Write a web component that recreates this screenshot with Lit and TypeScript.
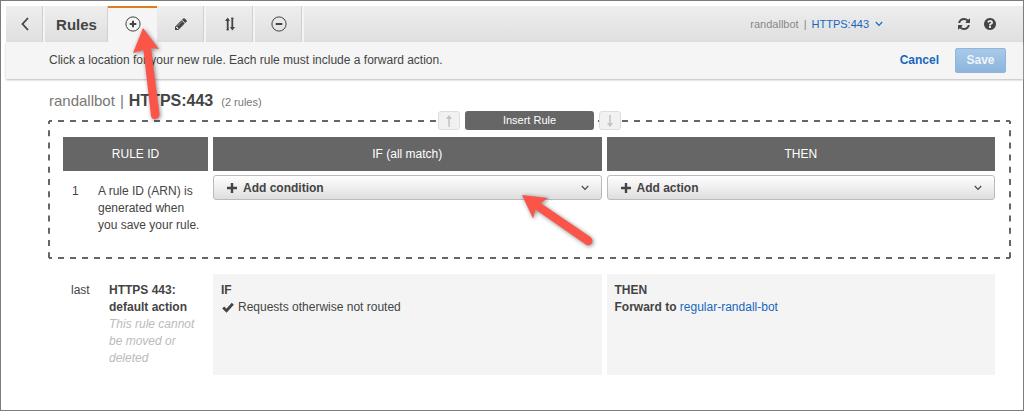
import { LitElement, html, css, svg } from 'lit';
import { customElement, property, state } from 'lit/decorators.js';
import { classMap } from 'lit/directives/class-map.js';

const chevron = svg`<svg class="chev" viewBox="0 0 8 6" width="8" height="6"><path d="M.8 1 4 4.4 7.2 1" fill="none" stroke="currentColor" stroke-width="1.1"/></svg>`;

const icons: Record<string, unknown> = {
  add: svg`<svg viewBox="0 0 16 16" width="16" height="16"><circle cx="8" cy="8" r="7.1" fill="none" stroke="currentColor"/><path d="M8 4.7v6.6M4.7 8h6.6" stroke="currentColor" stroke-width="2" fill="none"/></svg>`,
  edit: svg`<svg viewBox="0 128 1536 1536" width="12" height="12"><path fill="currentColor" d="M363 1536l91-91-235-235-91 91v107h128v128h107zm523-928q0-22-22-22-10 0-17 7L305 1135q-7 7-7 17 0 22 22 22 10 0 17-7L879 625q7-7 7-17zM832 416l416 416L416 1664H0v-416zm683 96q0 53-37 90l-166 166L896 352l166-165q36-38 90-38 53 0 91 38l235 234q37 39 37 91z"/></svg>`,
  reorder: svg`<svg viewBox="0 0 10 14" width="10" height="14"><path d="M2.7 13.2V2M7.300 .8V12" stroke="currentColor" stroke-width="1.800" fill="none"/><path d="M0 4 2.700.6 5 4ZM5 10l2.300 3.400L10 10Z" fill="currentColor"/><path d="M1.500 12.700h2.400M6.100 1.300h2.400" stroke="currentColor"/></svg>`,
  remove: svg`<svg viewBox="0 0 16 16" width="16" height="16"><circle cx="8" cy="8" r="7.1" fill="none" stroke="currentColor"/><path d="M4.700 8h6.600" stroke="currentColor" stroke-width="2" fill="none"/></svg>`,
};

@customElement('add-button')
class AddButton extends LitElement {
  @property() label = '';

  static styles = css`
    :host { display: block; }
    .add {
      display: flex; align-items: center; width: 100%; height: 25px; box-sizing: border-box;
      padding: 0 12px 0 13px; border: 1px solid #bbb; border-radius: 3px; cursor: pointer;
      background: linear-gradient(#fff, #dedede); color: #444;
      font: bold 12px/16px "Liberation Sans", Arial, sans-serif;
    }
    .text { flex: 1; margin-left: 6px; text-align: left; }
  `;

  render() {
    return html`<button class="add" aria-haspopup="menu">
      <svg viewBox="0 0 10 10" width="10" height="10"><path d="M5 0v10M0 5h10" stroke="currentColor" stroke-width="2.400"/></svg>
      <span class="text">${this.label}</span>${chevron}
    </button>`;
  }
}

@customElement('app-root')
class AppRoot extends LitElement {
  @state() mode = 'add';

  static styles = css`
    :host {
      display: block; box-sizing: border-box; min-height: 100vh; position: relative;
      padding: 5px 0 0 5px; border: 1px solid #7c7c7c; background: #fff; color: #444;
      font: 12px/17px "Liberation Sans", Arial, sans-serif;
    }
    button { font: inherit; cursor: pointer; }
    a { color: #1568bd; text-decoration: none; }
    .bar { display: flex; height: 36px; background: linear-gradient(#eee, #dfdfdf); }
    .cell {
      display: flex; align-items: center; justify-content: center; box-sizing: border-box;
      margin: 0; padding: 0; border: 0; border-right: 2px solid #f4f4f4; box-shadow: inset -1px 0 #d0d0d0;
      background: none; color: #444;
    }
    .back { width: 39px; }
    .title { width: 63px; font-size: 15px; font-weight: bold; border-right: 0; }
    .tab { width: 49px; }
    .tab.active { padding-bottom: 2px; background: #f5f5f5; border-top: 2px solid #e07b1f; border-right: 0; box-shadow: none; }
    .spacer { flex: 1; }
    .picker { display: flex; align-items: center; gap: 5px; margin-right: 75px; font-size: 11px; color: #888; }
    .picker a { display: flex; align-items: center; gap: 6px; }
    .tools { display: flex; align-items: center; gap: 14px; padding-right: 27px; }
    .tool { display: flex; padding: 0; border: 0; background: none; color: #444; }
    .hint {
      display: flex; align-items: center; height: 37px; padding: 0 17px 0 43px;
      background: #f5f5f5; box-shadow: 0 1px 2px #bbb;
    }
    .message { flex: 1; }
    .cancel { padding: 0; border: 0; background: none; color: #1568bd; font-weight: bold; }
    .save {
      width: 51px; height: 25px; margin-left: 16px; padding: 0; border: 1px solid #8fb5dc; border-radius: 2px;
      background: linear-gradient(#a9c9e8, #8db5dd); color: #eef5fb; font-weight: bold;
    }
    .content { padding: 12px 13px 0 43px; }
    .heading { display: flex; align-items: baseline; gap: 5px; margin: 0; font-size: 15px; line-height: 20px; font-weight: normal; color: #777; }
    .heading b { color: #444; font-size: 16px; }
    .count { margin-left: 3px; font-size: 11px; }
    .draft { position: relative; margin-top: 9px; padding: 16px 15px 20px 14px; min-height: 101px; }
    .outline { position: absolute; inset: 0; width: 100%; height: 100%; overflow: visible; stroke: #666; stroke-width: 2px; stroke-dashoffset: 3px; }
    .across { stroke-dasharray: 6 6; }
    .down { stroke-dasharray: 6 6.2; }
    .insert { position: absolute; top: -10px; left: 0; right: 0; display: flex; justify-content: center; align-items: center; gap: 5px; }
    .place { width: 129px; height: 19px; padding: 0; border: 0; border-radius: 3px; background: #666; color: #fff; font-size: 11px; line-height: 19px; }
    .move { display: flex; align-items: center; justify-content: center; width: 22px; height: 19px; padding: 0; border: 1px solid #ddd; border-radius: 3px; background: #f1f1f1; color: #c2c2c2; }
    .rules { position: relative; width: calc(100% + 10px); margin: 0 -5px; border-spacing: 5px 0; table-layout: fixed; }
    .col-id { width: 145px; }
    th { height: 34px; padding: 0; font-weight: normal; background: #666; color: #fff; }
    td { padding: 0; vertical-align: top; }
    .slot { margin-top: 4px; }
    .identity { display: flex; padding: 12px 0 0 9px; }
    .position { width: 26px; }
    .note { flex: 1; }
    .rules .note { padding-right: 8px; }
    .default { display: grid; grid-template-columns: 145px 1fr 1fr; gap: 5px; margin: 16px 15px 30px 14px; }
    .default .identity { padding: 8px 0 0 8px; }
    .default .position { width: 38px; }
    .default .note { padding-right: 6px; }
    .locked { color: #bbb; font-style: italic; }
    .panel { box-sizing: border-box; min-height: 101px; padding: 8px; background: #f4f4f4; }
    .check { margin: 0 4px 0 1px; vertical-align: -2px; }
    .pointers { position: absolute; left: 0; top: 0; pointer-events: none; filter: drop-shadow(1px 1px 2px #0007); }
  `;

  tab(name: string, label: string) {
    return html`<button class=${classMap({ cell: true, tab: true, active: this.mode === name })}
      aria-label=${label} @click=${() => (this.mode = name)}>${icons[name]}</button>`;
  }

  render() {
    return html`
      <header class="bar">
        <button class="cell back" aria-label="Back"><svg viewBox="0 0 8 14" width="8" height="14"><path d="M7 1 1.500 7 7 13" fill="none" stroke="currentColor" stroke-width="1.800"/></svg></button>
        <div class="cell title">Rules</div>
        ${this.tab('add', 'Add rules')}${this.tab('edit', 'Edit rules')}${this.tab('reorder', 'Reorder rules')}${this.tab('remove', 'Delete rules')}
        <div class="spacer"></div>
        <div class="picker"><span>randallbot</span><span>|</span><a href="#listener">HTTPS:443 ${chevron}</a></div>
        <div class="tools">
          <button class="tool" aria-label="Refresh"><svg viewBox="0 0 1536 1536" width="12" height="12"><path fill="currentColor" d="M1511 928q0 5-1 7-64 268-268 434.500T764 1536q-146 0-282.500-55T238 1324l-129 129q-19 19-45 19t-45-19-19-45V960q0-26 19-45t45-19h448q26 0 45 19t19 45-19 45l-137 137q71 66 161 102t187 36q134 0 250-65t186-179q11-17 53-117 8-23 30-23h192q13 0 22.500 9.500t9.500 22.500zm25-800v448q0 26-19 45t-45 19h-448q-26 0-45-19t-19-45 19-45l138-138Q969 256 768 256q-134 0-250 65T332 500q-11 17-53 117-8 23-30 23H50q-13 0-22.500-9.500T18 608v-7q65-268 270-434.500T768 0q146 0 284 55.500T1297 212l130-129q19-19 45-19t45 19 19 45z"/></svg></button>
          <button class="tool" aria-label="Help"><svg viewBox="0 0 1536 1536" width="12" height="12"><path fill="currentColor" d="M896 1248v-192q0-14-9-23t-23-9H672q-14 0-23 9t-9 23v192q0 14 9 23t23 9h192q14 0 23-9t9-23zm256-672q0-88-55.500-163T958 297t-170-41q-243 0-371 213-15 24 8 42l132 100q7 6 19 6 16 0 25-12 53-68 86-92 34-24 86-24 48 0 85.500 26t37.500 59q0 38-20 61t-68 45q-63 28-115.500 86.500T640 892v36q0 14 9 23t23 9h192q14 0 23-9t9-23q0-19 21.500-49.500T972 829q32-18 49-28.500t46-35 44.500-48 28-60.500 12.500-81zm384 192q0 209-103 385.500T1153.500 1433 768 1536t-385.500-103T103 1153.500 0 768t103-385.500T382.500 103 768 0t385.500 103T1433 382.500 1536 768z"/></svg></button>
        </div>
      </header>
      <section class="hint">
        <span class="message">Click a location for your new rule. Each rule must include a forward action.</span>
        <button class="cancel">Cancel</button><button class="save">Save</button>
      </section>
      <main class="content">
        <h1 class="heading"><span>randallbot</span><span>|</span><b>HTTPS:443</b><span class="count">(2 rules)</span></h1>
        <section class="draft">
          <svg class="outline">
            <line class="across" x1="0" y1="0" x2="100%" y2="0"/><line class="across" x1="0" y1="100%" x2="100%" y2="100%"/>
            <line class="down" x1="0" y1="0" x2="0" y2="100%"/><line class="down" x1="100%" y1="0" x2="100%" y2="100%"/>
          </svg>
          <table class="rules">
            <colgroup><col class="col-id"><col><col></colgroup>
            <thead><tr><th>RULE ID</th><th>IF (all match)</th><th>THEN</th></tr></thead>
            <tbody><tr>
              <td><div class="identity"><span class="position">1</span><span class="note">A rule ID (ARN) is generated when you save your rule.</span></div></td>
              <td><add-button class="slot" label="Add condition"></add-button></td>
              <td><add-button class="slot" label="Add action"></add-button></td>
            </tr></tbody>
          </table>
          <div class="insert">
            <button class="move" aria-label="Move up"><svg viewBox="0 0 8 12" width="8" height="12"><path d="M4 12V2" stroke="currentColor" stroke-width="1.500"/><path d="M1 4 4 0l3 4Z" fill="currentColor"/></svg></button>
            <button class="place">Insert Rule</button>
            <button class="move" aria-label="Move down"><svg viewBox="0 0 8 12" width="8" height="12"><path d="M4 0v10" stroke="currentColor" stroke-width="1.500"/><path d="M1 8l3 4 3-4Z" fill="currentColor"/></svg></button>
          </div>
        </section>
        <section class="default">
          <div class="identity"><span class="position">last</span>
            <div class="note"><b>HTTPS 443: default action</b><div class="locked">This rule cannot be moved or deleted</div></div></div>
          <div class="panel"><b>IF</b><div><svg class="check" viewBox="0 0 12 11" width="12" height="11"><path d="M1.200 5.500 4.500 8.700 10.800 1.800" fill="none" stroke="currentColor" stroke-width="2.800"/></svg>Requests otherwise not routed</div></div>
          <div class="panel"><b>THEN</b><div><b>Forward to</b> <a href="#target">regular-randall-bot</a></div></div>
        </section>
      </main>
      <svg class="pointers" width="620" height="260" viewBox="1 1 620 260" fill="#fb5549">
        <path d="M143 28 159 49 151 48 159.500 114Q159.500 118 156 119T151 116L143.500 50 133 53Z"/>
        <path d="M522 195 548 198 540.500 203 590.500 237Q593.500 240 592 243T586.500 245L535.500 209.500 533 218.500Z"/>
      </svg>
    `;
  }
}
